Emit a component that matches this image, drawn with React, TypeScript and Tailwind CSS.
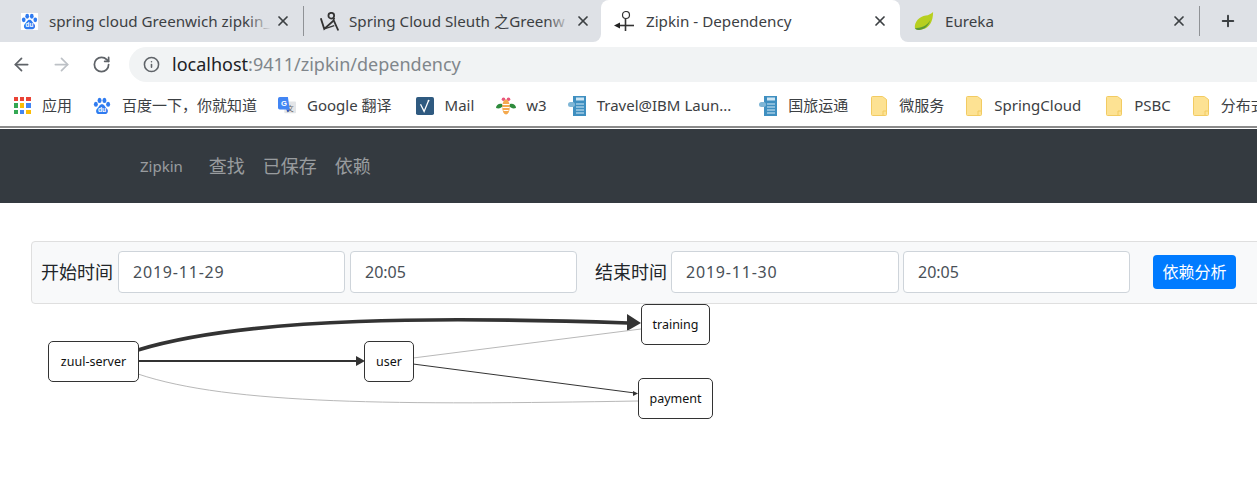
import { ArrowLeft, ArrowRight, Info, Plus, RotateCw, X } from "lucide-react";
import type { ReactNode } from "react";

function BaiduIcon({ className }: { className: string }) {
  return (
    <svg viewBox="0 0 20 20" className={className}>
      <rect width="20" height="20" fill="#fff" />
      <ellipse cx="3.2" cy="8" rx="2.2" ry="2.8" fill="#2f7bf0" />
      <ellipse cx="7.3" cy="3.8" rx="2.2" ry="2.9" fill="#2f7bf0" />
      <ellipse cx="12.7" cy="3.8" rx="2.2" ry="2.9" fill="#2f7bf0" />
      <ellipse cx="16.8" cy="8" rx="2.2" ry="2.8" fill="#2f7bf0" />
      <path d="M10 8c-3 0-3 3-5.500 5-2 2-1 6 2 6h7c3 0 4-4 2-6-2.500-2-2.500-5-5.500-5z" fill="#2f7bf0" />
      <text x="10" y="17" textAnchor="middle" fontSize="7.500" fontWeight="700" fill="#fff" fontFamily="Liberation Sans, sans-serif">du</text>
    </svg>
  );
}

function SleuthIcon() {
  return (
    <svg viewBox="0 0 18 18" className="h-[19px] w-[19px]" fill="none" stroke="#333" strokeWidth="1.700">
      <circle cx="10.700" cy="3.500" r="2.700" />
      <path d="M0.800 6L4 16L12.500 8.500L13.500 5.500" />
      <path d="M13 8L17.300 17.500" />
      <path d="M4 16L13.500 13" strokeWidth="1.200" />
    </svg>
  );
}

function ZipkinIcon() {
  return (
    <svg viewBox="0 0 20 20" className="h-5 w-5 -translate-x-[2px]" fill="none" stroke="#333">
      <circle cx="12" cy="4" r="3.500" strokeWidth="1.200" />
      <path d="M11.500 7.500V20" strokeWidth="1.600" />
      <path d="M5 14.500H20" strokeWidth="1.600" />
      <path d="M0 14.500L6 11.500V17.500z" fill="#222" stroke="none" />
    </svg>
  );
}

function SpringIcon() {
  return (
    <svg viewBox="0 0 22 20" className="h-5 w-[22px] -translate-x-px">
      <path d="M21 0c0 10-4 18-12 19-4 1-7 0-8-1C0 11 6 5 13 4c3-.5 6-2 8-4z" fill="#b7cf1f" />
      <path d="M1 18c6 0 13-2 17-9-2 7-8 11-12 11-2 0-4 0-5-2z" fill="#5c9a35" />
    </svg>
  );
}

function AppsIcon() {
  const colors = ["#ea4335", "#ea4335", "#ea4335", "#34a853", "#fbbc05", "#4285f4", "#34a853", "#4285f4", "#fbbc05"];
  return (
    <div className="grid h-[17px] w-[17px] grid-cols-3 gap-[2px]">
      {colors.map((color, index) => (
        <span key={index} style={{ backgroundColor: color }} />
      ))}
    </div>
  );
}

function TranslateIcon() {
  return (
    <svg viewBox="0 0 20 20" className="h-5 w-5">
      <rect x="7" y="5" width="13" height="13" rx="1" fill="#e3e5e8" />
      <text x="13.500" y="15" textAnchor="middle" fontSize="8" fill="#666" fontFamily="Noto Sans CJK SC, sans-serif">文</text>
      <path d="M2 0h9l2 14H2a2 2 0 0 1-2-2V2a2 2 0 0 1 2-2z" fill="#4285f4" />
      <path d="M9 14h4l-2 3z" fill="#2a56c6" />
      <text x="6.500" y="10" textAnchor="middle" fontSize="8.500" fontWeight="700" fill="#fff" fontFamily="Liberation Sans, sans-serif">G</text>
    </svg>
  );
}

function MailIcon() {
  return (
    <svg viewBox="0 0 20 20" className="h-5 w-5">
      <rect width="20" height="20" rx="2" fill="#2f5a80" />
      <path d="M5 8l4 8 5-12" fill="none" stroke="#fff" strokeWidth="1.400" />
      <circle cx="14" cy="4" r="1" fill="#fff" />
    </svg>
  );
}

function BeeIcon() {
  return (
    <svg viewBox="0 0 20 18" className="h-[18px] w-5 shrink-0">
      <circle cx="7.500" cy="2.200" r="1.800" fill="#e8577c" />
      <circle cx="12.500" cy="2.200" r="1.800" fill="#e8577c" />
      <path d="M6 7C3 6 0 8 0 11c3 1 5 0 7-2z" fill="#2e8b3c" />
      <path d="M14 7c3-1 6 1 6 4-3 1-5 0-7-2z" fill="#2e8b3c" />
      <ellipse cx="10" cy="10" rx="3.800" ry="7.500" fill="#f4a94e" />
      <path d="M6.500 7.500h7M6.500 10.500h7M7.500 13.500h5" stroke="#fff" strokeWidth="1.100" />
    </svg>
  );
}

function DocIcon() {
  return (
    <svg viewBox="0 0 18 20" className="h-5 w-[18px]">
      <rect x="5" y="0" width="13" height="20" fill="#3f8fc0" />
      <rect x="8" y="1.500" width="8" height="3" fill="#cfe6f3" />
      <path d="M8 8h8M8 11h8M8 14h8M8 17h8" stroke="#d5eaf6" strokeWidth="1" />
      <rect x="0" y="6" width="7" height="5" rx="2.500" fill="#7fb6d6" />
    </svg>
  );
}

function FolderIcon() {
  return (
    <svg viewBox="0 0 16 20" className="h-5 w-4">
      <path d="M1.500 0.500h10l4 3v15a1 1 0 0 1-1 1h-13a1 1 0 0 1-1-1v-17a1 1 0 0 1 1-1z" fill="#fde293" stroke="#f2cb62" />
      <path d="M12 19v-4h3.500" fill="none" stroke="#f2cb62" />
    </svg>
  );
}

type TabProps = {
  icon: ReactNode;
  title: string;
  active?: boolean;
  width: string;
  fade?: boolean;
};

function Tab({ icon, title, active, width, fade }: TabProps) {
  return (
    <div
      className={`relative flex h-[42px] items-center pl-[15px] ${width} ${
        active ? "rounded-t-lg bg-white" : ""
      }`}
    >
      {active ? (
        <>
          <span className="absolute -left-2 bottom-0 h-2 w-2 bg-white">
            <span className="block h-2 w-2 rounded-br-lg bg-[#dee1e6]" />
          </span>
          <span className="absolute -right-2 bottom-0 h-2 w-2 bg-white">
            <span className="block h-2 w-2 rounded-bl-lg bg-[#dee1e6]" />
          </span>
        </>
      ) : null}
      <div className="flex w-5 shrink-0 justify-center">{icon}</div>
      <div className="relative ml-[10px] min-w-0 flex-1 whitespace-nowrap text-[15.200px] text-[#3c4043]">
        {title}
        {fade ? (
          <span className="absolute inset-y-0 right-0 w-6 bg-gradient-to-r from-transparent to-[#dee1e6]" />
        ) : null}
      </div>
      <X className="ml-[4px] h-[16px] w-[16px] shrink-0 text-[#3c4043]" strokeWidth={2.6} />
    </div>
  );
}

const bookmarks: Array<{ icon: ReactNode; label: string; left: string }> = [
  { icon: <AppsIcon />, label: "应用", left: "ml-[13px]" },
  { icon: <BaiduIcon className="h-[18px] w-[18px]" />, label: "百度一下，你就知道", left: "ml-[21px]" },
  { icon: <TranslateIcon />, label: "Google 翻译", left: "ml-[21px]" },
  { icon: <MailIcon />, label: "Mail", left: "ml-[24px]" },
  { icon: <BeeIcon />, label: "w3", left: "ml-[23px]" },
  { icon: <DocIcon />, label: "Travel@IBM Laun...", left: "ml-[21px]" },
  { icon: <DocIcon />, label: "国旅运通", left: "ml-[28px]" },
  { icon: <FolderIcon />, label: "微服务", left: "ml-[22px]" },
  { icon: <FolderIcon />, label: "SpringCloud", left: "ml-[21px]" },
  { icon: <FolderIcon />, label: "PSBC", left: "ml-[24px]" },
  { icon: <FolderIcon />, label: "分布式", left: "ml-[21px]" },
];

const graphNodes = [
  { name: "zuul-server", className: "left-[48px] top-[37px] h-[41px] w-[91px]" },
  { name: "user", className: "left-[364px] top-[37px] h-[41px] w-[50px]" },
  { name: "training", className: "left-[641px] top-[0px] h-[41px] w-[69px]" },
  { name: "payment", className: "left-[638px] top-[74px] h-[41px] w-[75px]" },
];

function DateField({ value, className }: { value: string; className: string }) {
  return (
    <div
      className={`flex h-[42px] items-center rounded border border-[#ced4da] bg-white px-[14px] text-[16px] text-[#495057] ${className}`}
    >
      {value}
    </div>
  );
}

export default function App() {
  return (
    <div className="h-[482px] w-[1257px] overflow-hidden bg-white font-['Noto_Sans','Noto_Sans_CJK_SC',sans-serif]">
      {/* tab strip */}
      <div className="flex h-[42px] items-center bg-[#dee1e6] pl-1">
        <Tab width="w-[299px] pr-[12px]" icon={<BaiduIcon className="h-[17px] w-[17px]" />} title="spring cloud Greenwich zipkin_" fade />
        <div className="h-[30px] w-px bg-[#8f9296]" />
        <Tab width="w-[297px] pr-[10px]" icon={<SleuthIcon />} title="Spring Cloud Sleuth 之Greenw" fade />
        <Tab width="w-[299px] pr-[12px]" icon={<ZipkinIcon />} title="Zipkin - Dependency" active />
        <Tab width="w-[299px] pr-[12px]" icon={<SpringIcon />} title="Eureka" />
        <div className="h-[30px] w-px bg-[#8f9296]" />
        <Plus className="ml-[19px] h-[18px] w-[18px] text-[#3c4043]" strokeWidth={2.6} />
      </div>

      {/* toolbar */}
      <div className="flex h-[46px] items-center bg-white pb-px">
        <ArrowLeft className="ml-[11px] h-[21px] w-[21px] text-[#5f6368]" strokeWidth={2} />
        <ArrowRight className="ml-[19px] h-[21px] w-[21px] text-[#bdc1c6]" strokeWidth={2} />
        <RotateCw className="ml-[20px] h-[19px] w-[19px] text-[#5f6368]" strokeWidth={2.2} />
        <div className="ml-[18px] flex h-[35px] flex-1 items-center rounded-l-full bg-[#f1f3f4] pl-[14px]">
          <Info className="h-[17px] w-[17px] text-[#5f6368]" strokeWidth={2.2} />
          <div className="ml-[12px] text-[18px] text-[#80868b]">
            <span className="text-[#202124]">localhost</span>:9411/zipkin/dependency
          </div>
        </div>
      </div>

      {/* bookmarks */}
      <div className="flex h-[40px] items-center whitespace-nowrap border-b-2 border-b-[#8b8b8b] bg-white pb-[3px] text-[15px] text-[#3c4043]">
        {bookmarks.map((item) => (
          <div key={item.label} className={`flex shrink-0 items-center ${item.left}`}>
            <div className="flex w-[18px] justify-center">{item.icon}</div>
            <span className="ml-[11px]">{item.label}</span>
          </div>
        ))}
      </div>

      {/* navbar */}
      <nav className="mt-px flex h-[74px] items-center bg-[#343a40] pl-[140px] text-[rgba(255,255,255,0.5)]">
        <span className="text-[15px]">Zipkin</span>
        <span className="ml-[26px] text-[18px]">查找</span>
        <span className="ml-[18px] text-[18px]">已保存</span>
        <span className="ml-[18px] text-[18px]">依赖</span>
      </nav>

      {/* filter */}
      <div className="ml-[31px] mt-[38px] flex h-[63px] w-[1240px] items-center rounded border border-[#dfdfdf] bg-[#f8f9fa] pb-px pl-[9px]">
        <span className="text-[18px] text-[#212529]">开始时间</span>
        <DateField value="2019-11-29" className="ml-[5px] w-[227px] tracking-[0.8px]" />
        <DateField value="20:05" className="ml-[5px] w-[227px]" />
        <span className="ml-[18px] text-[18px] text-[#212529]">结束时间</span>
        <DateField value="2019-11-30" className="ml-[4px] w-[228px] tracking-[0.8px]" />
        <DateField value="20:05" className="ml-[4px] w-[227px]" />
        <button type="button" className="ml-[23px] h-[34px] w-[83px] rounded bg-[#007bff] text-[16px] text-white">
          依赖分析
        </button>
      </div>

      {/* dependency graph */}
      <div className="relative h-[178px] w-full">
        <svg className="absolute left-0 top-0 h-[178px] w-[1257px]" viewBox="0 304 1257 178" fill="none">
          <path d="M138 350C250 316 450 317 628 323" stroke="#333" strokeWidth="3.600" />
          <path d="M641 323L627 314L627 331Z" fill="#333" />
          <path d="M138 361H357" stroke="#333" strokeWidth="2" />
          <path d="M365 361L356 356V366Z" fill="#333" />
          <path d="M138 374C230 405 400 405 638 401" stroke="#b8b8b8" strokeWidth="1" />
          <path d="M413 358L641 329" stroke="#b8b8b8" strokeWidth="1" />
          <path d="M413 364L635 393" stroke="#333" strokeWidth="1" />
          <path d="M638 393.500L633 391V396Z" fill="#333" />
        </svg>
        {graphNodes.map((node) => (
          <div
            key={node.name}
            className={`absolute flex items-center justify-center rounded-[5px] border border-[#333] bg-white pt-px text-[12.500px] text-[#111] ${node.className}`}
          >
            {node.name}
          </div>
        ))}
      </div>
    </div>
  );
}
